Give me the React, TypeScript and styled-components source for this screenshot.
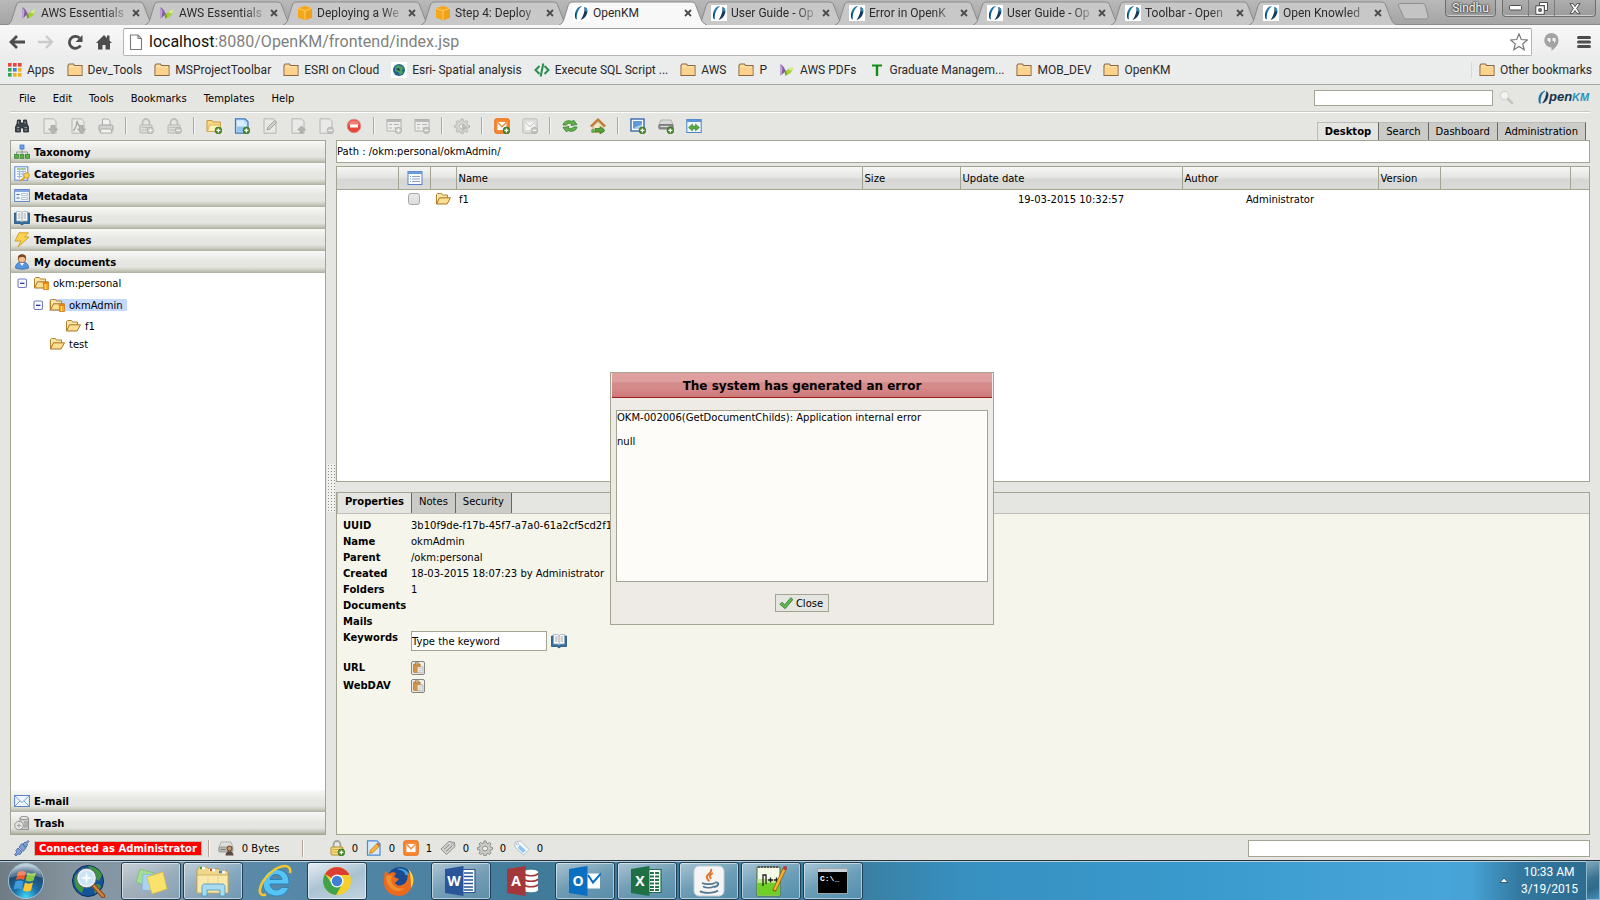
import React from "react";
import styled, { createGlobalStyle, css } from "styled-components";

const EDGE = "#a3a592";
const BASE = "#e5e6e1";
const CHROME_FONT = 'Roboto, "Open Sans", sans-serif';
const PAGE_FONT = '"DejaVu Sans", Verdana, sans-serif';

const Global = createGlobalStyle`
  * { box-sizing: border-box; }
  html, body { margin: 0; }
  body { font-family: ${PAGE_FONT}; font-size: 10px; color: #000; overflow: hidden; }
  button, input { font: inherit; color: inherit; }
  button { border: 0; background: none; padding: 0; }
  a { color: inherit; text-decoration: none; }
`;

/* ---------- icons ---------- */

const plus = (
  <g>
    <circle cx="12.4" cy="12.4" r="3.4" fill="#4b8b2c" stroke="#2f6a1c" strokeWidth=".6" />
    <path d="M12.4 10.4v4M10.4 12.4h4" stroke="#fff" strokeWidth="1.3" />
  </g>
);
const greyBadge = (minus?: boolean) => (
  <g>
    <circle cx="12.4" cy="12.4" r="3.2" fill="#c4c4c2" stroke="#a6a6a4" strokeWidth=".6" />
    <path d={minus ? "M10.4 12.4h4" : "M12.4 10.4v4M10.4 12.4h4"} stroke="#f4f4f2" strokeWidth="1.2" />
  </g>
);
const greyPage = <path d="M2 .8h9.5l2.5 2.6v11.8H2z" fill="#e9e9e7" stroke="#b4b4b2" />;
const greyLock = (
  <g>
    <path d="M4.5 7V4.5a3.5 3.5 0 0 1 7 0V7" fill="none" stroke="#bdbdbb" strokeWidth="1.8" />
    <rect x="2" y="7" width="12" height="8" rx="1" fill="#dcdcda" stroke="#b4b4b2" />
    <path d="M3.5 9.5h9M3.5 12h9" stroke="#bdbdbb" />
  </g>
);
const greyForm = (
  <g>
    <rect x="1" y="1.5" width="14" height="11.5" fill="#ededeb" stroke="#b2b2b0" />
    <path d="M1 3h14" stroke="#b8b8b6" strokeWidth="2" />
    <path d="M3 6.5h3M8 6.5h5M3 10h3M8 10h5" stroke="#b2b2b0" />
  </g>
);
const greyMail = (
  <g>
    <rect x=".8" y=".8" width="14.4" height="14.4" rx="1.5" fill="#dededc" stroke="#bcbcba" />
    <path d="M3.5 4h9v8h-9z" fill="#f4f4f2" />
    <path d="M3.5 4.3L8 8.8l4.5-4.5" fill="none" stroke="#bcbcba" />
  </g>
);
const orangeMail = (
  <g>
    <rect x=".8" y=".8" width="14.4" height="14.4" rx="1.5" fill="#f88a35" stroke="#e96a0c" />
    <path d="M3.5 4h9v8h-9z" fill="#fff" />
    <path d="M3.5 4.3L8 8.8l4.5-4.5" stroke="#ee8a3c" fill="none" strokeWidth="1.3" />
  </g>
);
const openFolder = (
  <g>
    <path d="M1.5 13V3.5L2.5 2.5h4l1 1.5h5V7" fill="#f8e5a8" stroke="#b4822f" />
    <path d="M1.5 13L4.5 6.8h11L12 13z" fill="#fbdf92" stroke="#ab7220" />
  </g>
);
const gear = (fill: string, stroke: string) => (
  <g>
    <path
      d="M7 1h2l.4 2 1.5.6 1.7-1.1 1.4 1.4-1.1 1.7.6 1.5 2 .4v2l-2 .4-.6 1.5 1.1 1.7-1.4 1.4-1.7-1.1-1.5.6-.4 2H7l-.4-2-1.5-.6-1.7 1.1L2 13.1l1.1-1.7-.6-1.5-2-.4v-2l2-.4.6-1.5L2 3.9l1.4-1.4 1.7 1.1L6.6 3z"
      fill={fill}
      stroke={stroke}
    />
    <circle cx="8" cy="8.5" r="2.5" fill="#eeeeea" stroke={stroke} />
  </g>
);

const ICONS: Record<string, React.ReactNode> = {
  binoculars: (
    <g>
      <path d="M3.5 2h3v3h3V2h3l.5 3.5 1.5 3.5v5h-5v-4h-3v4h-5V9L3 5.5z" fill="#3b424a" stroke="#20262c" strokeWidth=".8" />
      <path d="M3 9.5h2.5M10.5 9.5H13M4.5 3.5v2M11 3.5v2M3 12h2.5M10.5 12H13" stroke="#8e9ba6" />
    </g>
  ),
  download: <g>{greyPage}<path d="M9 7.5h4V11h2.5L11 15.5 6.5 11H9z" fill="#b5b5b3" stroke="#9c9c9a" strokeWidth=".7" /></g>,
  pdf: (
    <g>
      {greyPage}
      <path d="M3.5 13C6 9.5 7 6.5 7 3c.8 4 2 6 5.5 7" fill="none" stroke="#a9a9a7" strokeWidth="1.4" />
      <path d="M9.5 7.5H13V11h2.5l-4 4.5-4-4.5h2z" fill="#b5b5b3" stroke="#9c9c9a" strokeWidth=".7" />
    </g>
  ),
  print: (
    <g>
      <path d="M4.5 7V1H10l2 2v4" fill="#f2f2f0" stroke="#acacaa" />
      <rect x="1" y="7" width="14" height="6" rx="1.5" fill="#d2d2d0" stroke="#a2a2a0" />
      <path d="M3 11h10l1 4H2z" fill="#f2f2f0" stroke="#acacaa" />
    </g>
  ),
  lockPlus: <g>{greyLock}{greyBadge()}</g>,
  lockMinus: <g>{greyLock}{greyBadge(true)}</g>,
  folderPlus: (
    <g>
      <path d="M1 13.5v-11h5L7 4h7.5v9.5z" fill="#f8dc83" stroke="#c9973a" />
      <path d="M3.5 7h11v6.5h-13z" fill="#fdf0b8" stroke="#d2a548" strokeWidth=".8" />
      {plus}
    </g>
  ),
  docPlus: (
    <g>
      <path d="M1.5.8H11l3 3v11.4H1.5z" fill="#b9dbf8" stroke="#3c78bb" strokeWidth="1.2" />
      <path d="M3 7.5h9.5v6H3z" fill="#8fc2f0" />
      <path d="M3 2.5h7v3h2.5v3H3z" fill="#dceefd" />
      {plus}
    </g>
  ),
  edit: <g>{greyPage}<path d="M5 12l1-3 6.5-6.5 2 2L8 11z" fill="#cfcfcd" stroke="#a2a2a0" /></g>,
  upload: <g>{greyPage}<path d="M11.5 8l4 4H13v3h-3v-3H7.5z" fill="#b5b5b3" stroke="#a0a09e" strokeWidth=".7" /></g>,
  docMinus: <g>{greyPage}{greyBadge(true)}</g>,
  stop: (
    <g>
      <circle cx="8" cy="8" r="6.8" fill="#e8453b" stroke="#d98f88" />
      <path d="M2.5 7a5.6 5.6 0 0 1 11 0z" fill="#f39a90" opacity=".7" />
      <rect x="4" y="6.6" width="8" height="2.8" rx=".5" fill="#fff" />
    </g>
  ),
  formPlus: <g>{greyForm}{greyBadge()}</g>,
  formMinus: <g>{greyForm}{greyBadge(true)}</g>,
  gearGrey: <g>{gear("#d4d4d2", "#b8b8b6")}<path d="M8 6l6 3.5-6 4z" fill="#bbbbb9" /></g>,
  mailPlus: <g>{orangeMail}{plus}</g>,
  mailMinus: <g>{greyMail}{greyBadge(true)}</g>,
  refresh: (
    <g fill="#63b04c" stroke="#34802a" strokeWidth=".8">
      <path d="M1 7c.5-3.5 5-5.5 9-3.5L11.5 2 15 6.5 9 7.500l1-1.7c-2.5-1-4.5-.5-5.5 1.2z" />
      <path d="M15 9c-.5 3.5-5 5.5-9 3.5L4.5 14 1 9.5l6-1-1 1.7c2.5 1 4.5.5 5.5-1.2z" />
    </g>
  ),
  home: (
    <g>
      <path d="M3 8v6.5h10V8L8 3.5z" fill="#f4e6c4" stroke="#b58a4c" strokeWidth=".8" />
      <path d="M.8 8.5L8 1.5l7.2 7" fill="none" stroke="#c07b35" strokeWidth="2.2" />
      <path d="M5 10.5h5v-2l5 4-5 3.5v-2.500H5z" fill="#55a23b" stroke="#2f7322" strokeWidth=".7" />
      <circle cx="3" cy="13" r="2" fill="#63ad48" />
    </g>
  ),
  imagePlus: (
    <g>
      <rect x="1" y="1" width="13" height="12" fill="#fff" stroke="#3968ab" strokeWidth="1.4" />
      <rect x="3" y="3" width="9" height="7.5" fill="#5d9bd8" />
      <path d="M3 10.5h9V6z" fill="#a7ceef" />
      {plus}
    </g>
  ),
  scanPlus: (
    <g>
      <path d="M3 2h10l2 4.5H1z" fill="#d9d9d9" stroke="#a5a5a5" strokeWidth=".8" />
      <rect x=".8" y="6.5" width="14.4" height="4.5" rx="1" fill="#8d8d8d" stroke="#707070" strokeWidth=".8" />
      <path d="M2.5 8.5h8" stroke="#dadada" />
      {plus}
    </g>
  ),
  split: (
    <g>
      <rect x=".8" y="1.5" width="14.4" height="13" fill="#eef6fb" stroke="#4b84c8" />
      <rect x=".8" y="1.5" width="14.4" height="2.5" fill="#5c95d8" />
      <path d="M6.5 6v2h3V6l4 3.5-4 3.5v-2h-3v2l-4-3.5z" fill="#56ab3c" stroke="#347a28" strokeWidth=".5" />
    </g>
  ),
  taxonomy: (
    <g>
      <path d="M8 4v4M2.5 11V8h11v3M8 8v3" fill="none" stroke="#8f9690" />
      <rect x="6" y="1" width="4" height="4" fill="#6d9fe4" stroke="#4474c2" strokeWidth=".8" />
      <g fill="#5fb04c" stroke="#35812a" strokeWidth=".8">
        <rect x=".6" y="10.5" width="3.8" height="3.8" />
        <rect x="6.1" y="10.5" width="3.8" height="3.8" />
        <rect x="11.6" y="10.5" width="3.8" height="3.8" />
      </g>
    </g>
  ),
  categories: (
    <g>
      <rect x=".8" y=".8" width="13" height="13.4" fill="#f6faff" stroke="#5b87c9" />
      <path d="M3 3h9" stroke="#77b45e" strokeWidth="1.3" />
      <path d="M3 5.5h9M3 8h9M3 10.5h5M5.5 4.5v8M9 4.5v6" stroke="#97b6df" />
      <circle cx="12.5" cy="9.5" r="2.8" fill="#f6cf57" stroke="#c58f1e" strokeWidth=".8" />
      <path d="M11 11l-4.5 4" stroke="#dca52a" strokeWidth="2.2" />
    </g>
  ),
  metadata: (
    <g>
      <rect x=".6" y="1.5" width="14.8" height="12" fill="#eff5fc" stroke="#6688c8" />
      <path d="M.6 3h14.8" stroke="#84a5dd" strokeWidth="2" />
      <path d="M2.5 6.5h3M2.5 10h3" stroke="#3f63ae" strokeWidth="1.2" />
      <path d="M7.5 5.5h6v2h-6zM7.5 9.5h6v2h-6z" fill="#fff" stroke="#a9b5c4" strokeWidth=".8" />
    </g>
  ),
  book: (
    <g>
      <path d="M.5 3h15v10.5H10L8 15l-2-1.5H.5z" fill="#336f9f" stroke="#1e5079" strokeWidth=".8" />
      <path d="M2.5 1.5h4L8 2.5l1.5-1h4V11h-4L8 12l-1.5-1h-4z" fill="#f8fafb" stroke="#8ca6b8" strokeWidth=".7" />
      <path d="M8 2.5V12M4 4h2.5M4 6h2.5M4 8h2.5M9.5 4H12M9.5 6H12M9.5 8H12" stroke="#9a9a9a" strokeWidth=".9" />
    </g>
  ),
  bolt: <path d="M5 .8h9.5L10.5 5H15L4 15l3-6H1z" fill="#fbd252" stroke="#d39b1e" strokeWidth=".9" />,
  user: (
    <g>
      <path d="M1.5 14c0-4 2.5-6 6.5-6s6.5 2 6.5 6c-3 1.5-10 1.5-13 0z" fill="#5795e2" stroke="#2f65ad" strokeWidth=".8" />
      <path d="M6 9l2 3 2-3z" fill="#fff" />
      <circle cx="8" cy="5" r="3.7" fill="#f0c291" stroke="#8d5529" strokeWidth=".7" />
      <path d="M4 5.5C3.5 1.5 5.5.3 8 .3s4.500 1.2 4 5.2c-1-2-2-2.5-4-2.5S5 3.5 4 5.5z" fill="#7d4620" />
    </g>
  ),
  envelope: (
    <g>
      <rect x=".6" y="2.5" width="14.8" height="11" fill="#eef5fd" stroke="#5c82c2" />
      <path d="M1 3l7 6.5L15 3M1 13l5-5M15 13l-5-5" fill="none" stroke="#7ba1d8" />
    </g>
  ),
  trash: (
    <g>
      <path d="M6 3h8.5v11.5H6z" fill="#cfcfcd" stroke="#7f7f7d" strokeWidth=".8" />
      <ellipse cx="10.2" cy="3" rx="4.2" ry="1.6" fill="#e8e8e6" stroke="#7f7f7d" strokeWidth=".8" />
      <path d="M11 6v7M13 6v6.5" stroke="#8c8c8a" />
      <circle cx="5" cy="10.5" r="4.3" fill="#e3e3e1" stroke="#8c8c8a" strokeWidth=".9" />
      <path d="M3 10.5h4M5 8.5v4" stroke="#a0a09e" />
    </g>
  ),
  openFolder,
  folderHome: (
    <g>
      {openFolder}
      <path d="M10.5 8h5v6.5h-5z" fill="#fba61f" stroke="#d67d0c" strokeWidth=".8" />
      <path d="M12.5 9v5" stroke="#ffe2a6" strokeWidth="1.2" />
      <path d="M9.5 8H16" stroke="#d67d0c" strokeWidth="1.2" />
    </g>
  ),
  minus: (
    <g>
      <rect x="4" y="4" width="8.5" height="8.5" rx="1.5" fill="#fff" stroke="#6a7bc4" strokeWidth="1.1" />
      <path d="M6 8.3h4.5" stroke="#1c1f9c" strokeWidth="1.2" />
    </g>
  ),
  columns: (
    <g>
      <rect x="1" y="1.5" width="14" height="13" fill="#f9fbff" stroke="#5681c6" />
      <rect x="1" y="1.5" width="14" height="2.5" fill="#6c9ade" />
      <path d="M5 6.5h8M5 9h8M5 11.5h8M3 6.5h1M3 9h1M3 11.5h1" stroke="#8aa2c8" />
    </g>
  ),
  clipboard: (
    <g>
      <rect x="2" y="2.5" width="9" height="11.5" rx="1" fill="#d89441" stroke="#a36a22" strokeWidth=".8" />
      <rect x="4.5" y="1" width="4" height="3" fill="#cbb590" stroke="#8b6a35" strokeWidth=".7" />
      <path d="M7 6.5h7.5v8H7z" fill="#f4f4f4" stroke="#94918c" strokeWidth=".8" />
      <path d="M8.5 9H13M8.5 11H13M8.5 13h3" stroke="#b6b6b6" strokeWidth=".8" />
    </g>
  ),
  check: <path d="M1 9.5L3.5 7l3 3 7-8L16 4 7 14.5z" fill="#5fb74e" stroke="#31792a" strokeWidth=".9" />,
  plug: (
    <g fill="#7d9fd6" stroke="#476aa6" strokeWidth=".9">
      <path d="M9 4l2-2 1 .5 2-2 1 1-2 2 .5 1.5-2 3z" />
      <path d="M4 8l4 4-2 2.5-2-.5-2 2-1.5-1.5 2-2L2 10.5z" />
      <path d="M5 7l3-3.5L12 8l-3 3.5z" />
    </g>
  ),
  disk: (
    <g>
      <path d="M3 2h10l2 5.5H1z" fill="#dfdfdd" stroke="#a3a3a1" strokeWidth=".8" />
      <rect x=".8" y="7" width="14" height="5" rx="1" fill="#bcbcba" stroke="#8a8a88" strokeWidth=".8" />
      <path d="M2.5 9.5h5" stroke="#777" />
      <circle cx="11.5" cy="8.5" r="2.5" fill="#c99668" stroke="#54372a" strokeWidth=".9" />
      <path d="M7.5 15.5c0-6 8-6 8 0z" fill="#5a4a42" />
    </g>
  ),
  lockYellow: (
    <g>
      <path d="M4.5 7V4.5a3.5 3.5 0 0 1 7 0V7" fill="none" stroke="#a4a49c" strokeWidth="1.8" />
      <rect x="2" y="7" width="12" height="8" rx="1" fill="#f7db7c" stroke="#b48f2e" />
      <path d="M3.5 9.5h9M3.5 12h9" stroke="#d2a942" />
      {plus}
    </g>
  ),
  note: (
    <g>
      <path d="M1.5.8H11l3 3v11.4H1.5z" fill="#d9ebfb" stroke="#4b88cf" strokeWidth="1.2" />
      <path d="M3.5 13.5l1-3.5 7-7L14 5.500l-7 7z" fill="#f5b53c" stroke="#bd7b1c" strokeWidth=".8" />
      <path d="M11 3.5L13.5 6" stroke="#cf5f48" strokeWidth="1.5" />
    </g>
  ),
  mail: orangeMail,
  clip: (
    <g>
      <path d="M1 9l8-7.5 5.500 1 .5 4-8.5 8z" fill="#d4d4d2" stroke="#858583" strokeWidth=".9" />
      <path d="M4 9.5l5.5-5M6 11.5L12 6" stroke="#7e7e7c" />
      <circle cx="12.5" cy="4.3" r="1" fill="#fff" stroke="#858583" strokeWidth=".7" />
    </g>
  ),
  gear: gear("#cacac8", "#8c8c8a"),
  tag: (
    <g>
      <path d="M1 2l5.5-1L15 9.5 9.5 15 1 7z" fill="#f9fcff" stroke="#a9b5c1" strokeWidth=".9" />
      <path d="M5.500 4.5l6.5 6L9 13 4 8z" fill="#8cc5f2" />
      <circle cx="3.5" cy="3.8" r="1" fill="#fff" stroke="#9aa7b3" strokeWidth=".7" />
    </g>
  ),
  magnifier: (
    <g>
      <circle cx="6" cy="6" r="4.5" fill="#f2f2f1" stroke="#d2d2d1" strokeWidth="1.2" />
      <path d="M9.5 9.5L14 14" stroke="#c2c2c1" strokeWidth="2.6" strokeLinecap="round" />
    </g>
  ),
  /* browser chrome */
  leaf: (
    <g>
      <path d="M1.5 2C4 3.500 6 6.500 6.500 9.500l-5 4z" fill="#8457a8" />
      <path d="M1.5 2l2 4-.8 6.500-1.200 1z" fill="#c3a9d6" />
      <path d="M6.5 13.5C6 9.500 8.500 6 14 5c-.5 4-2.500 7.500-7.500 8.500z" fill="#a7cf38" />
      <path d="M9.500 7.500C11 5.500 12.500 5 14.500 4.500l-2 4z" fill="#dcec9a" />
      <path d="M5.500 9.500L7 7.500l1 4.500-1.500 2z" fill="#6fa322" />
    </g>
  ),
  cube: (
    <g>
      <path d="M8 .8l7 2.4v9.6l-7 2.4-7-2.4V3.2z" fill="#f6a81c" />
      <path d="M8 5.8l7-2.4v9.4l-7 2.4z" fill="#e99a10" opacity=".5" />
      <path d="M8 5.8v9.4M1 3.4l7 2.4 7-2.4" stroke="#fcd07a" strokeWidth=".9" fill="none" />
    </g>
  ),
  okm: (
    <g>
      <rect width="16" height="16" fill="#fff" />
      <path d="M9 1C4.5 1.5 1.5 6 2 11.5c.1 1.5.8 2.5 1.8 3-.4-4 .7-10 5.2-13.5z" fill="#1a74a8" />
      <path d="M3.8 14.5C2.5 12 3 8 4.5 6L2.2 9c-.4 2.5.2 4.7 1.6 5.5z" fill="#12395c" />
      <path d="M11.5 2c2.5.8 3.5 3.5 2.5 6.5-1 3-3 5.5-6.5 6.5 2.5-3.5 4.5-8 4-13z" fill="#17395a" />
      <path d="M11.5 2c2 .8 3 2.5 2.7 5L12 6z" fill="#2489bb" />
    </g>
  ),
  page: <path d="M2.5 1H10l3.5 3.5v11h-11zM10 1v3.5h3.5" fill="#fff" stroke="#7b7b7b" strokeWidth="1.1" />,
  bmFolder: (
    <g>
      <path d="M1 13.5v-10L2.2 2h4.3l1 1.5H15v10z" fill="#fbe0a4" stroke="#8d6742" strokeWidth="1.1" />
      <path d="M1.8 5.5h12.6V13H1.8z" fill="#fcd28c" />
    </g>
  ),
  apps: (
    <g>
      {["#e8453c", "#e8453c", "#e8453c", "#35a256", "#3d7fe0", "#f2b01e", "#35a256", "#f2b01e", "#f2b01e"].map((c, i) => (
        <rect key={i} x={2 + (i % 3) * 5} y={1 + Math.floor(i / 3) * 5} width="3.6" height="3.6" fill={c} />
      ))}
    </g>
  ),
  globe: (
    <g>
      <rect width="16" height="16" fill="#fff" />
      <circle cx="8" cy="8" r="6" fill="#20618f" />
      <path d="M4 5l3-2 3 1 3 2-2 2 1 3-3 2-2-3-3-1z" fill="#4b9e5e" />
      <path d="M5 7l3-1 1 3z" fill="#172f49" />
    </g>
  ),
  code: <path d="M5.5 4l-4 4 4 4M10.5 4l4 4-4 4M9.3 1.5l-2.6 13" fill="none" stroke="#2a8f4d" strokeWidth="2" />,
  tee: <path d="M3 2.500h10v2H9.200V14H6.800V4.500H3z" fill="#168a16" />,
};

const Svg = styled.svg<{ $s?: number }>`
  display: block;
  flex: none;
  width: ${(p) => p.$s ?? 16}px;
  height: ${(p) => p.$s ?? 16}px;
`;
const Icon = ({ name, size }: { name: string; size?: number }) => (
  <Svg $s={size} viewBox="0 0 16 16" aria-hidden="true">{ICONS[name]}</Svg>
);

/* ---------- browser window ---------- */

const Screen = styled.div`
  display: flex;
  flex-direction: column;
  height: 100vh;
  background: ${BASE};
`;
const TabStrip = styled.div`
  display: flex;
  height: 25px;
  padding-left: 11px;
  background: linear-gradient(#b9b9b9, #a4a4a4);
  border-bottom: 1px solid #8a8a8a;
  font-family: ${CHROME_FONT};
  font-size: 12px;
`;
const TabBox = styled.div<{ $active?: boolean }>`
  position: relative;
  z-index: ${(p) => (p.$active ? 2 : 1)};
  display: flex;
  align-items: center;
  flex: 0 1 138px;
  min-width: 0;
  height: 25px;
  padding: 0 6px 0 10px;
  gap: 3px;
`;
const TabShape = styled.svg`
  position: absolute;
  z-index: -1;
  left: -4px;
  top: 0;
  width: calc(100% + 10px);
  height: 25px;
`;
const TabLabel = styled.a<{ $active?: boolean }>`
  flex: 1;
  margin-left: 1px;
  overflow: hidden;
  white-space: nowrap;
  color: #2b2b2b;
  mask-image: ${(p) => (p.$active ? "none" : "linear-gradient(90deg, #000 76%, rgba(0, 0, 0, 0.2))")};
`;
const TabClose = styled.button`
  width: 14px;
  height: 14px;
  display: grid;
  place-items: center;
`;
const NewTab = styled.button`
  margin: 0 auto 0 6px;
  height: 24px;
`;
const Caption = styled.div`
  display: flex;
  height: 17px;
  padding-right: 4px;
  gap: 6px;
`;
const CaptionGroup = styled.div`
  display: flex;
  border: 1px solid #6f6f6f;
  border-top: 0;
  border-radius: 0 0 4px 4px;
  background: linear-gradient(#adadad, #9b9b9b);
  box-shadow: inset 0 -1px 0 #cfcfcf;
`;
const CaptionButton = styled.button<{ $w: number }>`
  width: ${(p) => p.$w}px;
  display: grid;
  place-items: center;
  font-size: 12px;
  line-height: 16px;
  color: #f4f4f4;
  text-shadow: 0 0 2px #222, 0 0 2px #222;
  & + & { border-left: 1px solid #7b7b7b; }
`;
const NavBar = styled.div`
  display: flex;
  align-items: center;
  height: 34px;
  padding: 2px 6px 2px 7px;
  gap: 9px;
  background: linear-gradient(#f8f8f8, #ececec);
  button { display: grid; place-items: center; width: 20px; height: 20px; }
  > button:last-child { margin-left: 4px; }
`;
const Omnibox = styled.div`
  flex: 1;
  display: flex;
  align-items: center;
  height: 28px;
  padding: 0 2px 0 4px;
  gap: 5px;
  background: #fff;
  border: 1px solid #b4b4b4;
  border-top-color: #9b9b9b;
  border-radius: 2px;
  font-family: ${CHROME_FONT};
  font-size: 16px;
  line-height: 20px;
`;
const UrlText = styled.a`
  flex: 1;
  color: #808080;
  b { font-weight: 400; color: #111; }
`;
const BookmarkBar = styled.nav`
  display: flex;
  align-items: center;
  height: 26px;
  padding: 0 8px 3px 6px;
  gap: 12px;
  background: #ebecec;
  border-bottom: 1px solid #a5a5a5;
  font-family: ${CHROME_FONT};
  font-size: 12px;
  line-height: 16px;
  color: #2a2a2a;
`;
const Bookmark = styled.a<{ $last?: boolean }>`
  display: flex;
  align-items: center;
  gap: 5px;
  white-space: nowrap;
  ${(p) => p.$last && css`margin-left: auto; padding-left: 7px; border-left: 1px solid #d3d9e0;`}
`;

const TABS: [string, string][] = [
  ["leaf", "AWS Essentials"],
  ["leaf", "AWS Essentials"],
  ["cube", "Deploying a We"],
  ["cube", "Step 4: Deploy"],
  ["okm", "OpenKM"],
  ["okm", "User Guide - Op"],
  ["okm", "Error in OpenK"],
  ["okm", "User Guide - Op"],
  ["okm", "Toolbar - Open"],
  ["okm", "Open Knowled"],
];
const BOOKMARKS: [string, string][] = [
  ["apps", "Apps"],
  ["bmFolder", "Dev_Tools"],
  ["bmFolder", "MSProjectToolbar"],
  ["bmFolder", "ESRI on Cloud"],
  ["globe", "Esri- Spatial analysis"],
  ["code", "Execute SQL Script ..."],
  ["bmFolder", "AWS"],
  ["bmFolder", "P"],
  ["leaf", "AWS PDFs"],
  ["tee", "Graduate Managem..."],
  ["bmFolder", "MOB_DEV"],
  ["bmFolder", "OpenKM"],
];

const Tab = ({ icon, label, active }: { icon: string; label: string; active?: boolean }) => (
  <TabBox $active={active}>
    <TabShape viewBox="0 0 148 25" preserveAspectRatio="none">
      <path
        d="M0 25C3 24 4 22 5 19L9 6C10 3 11 2 14 2H132C135 2 136 3 137 6L142 19C143 22 145 24 148 25"
        fill={active ? "#f8f8f8" : "#c8c8c8"}
        stroke="#8b8b8b"
      />
      {active && <path d="M2 25h144" stroke="#f8f8f8" strokeWidth="2" />}
    </TabShape>
    <Icon name={icon} />
    <TabLabel href="#" $active={active}>{label}</TabLabel>
    <TabClose aria-label="Close tab">
      <svg width="8" height="8" viewBox="0 0 8 8"><path d="M1 1l6 6M7 1L1 7" stroke="#4c4c4c" strokeWidth="1.8" /></svg>
    </TabClose>
  </TabBox>
);

const Browser = () => (
  <header>
    <TabStrip>
      {TABS.map(([icon, label], i) => <Tab key={i} icon={icon} label={label} active={i === 4} />)}
      <NewTab aria-label="New tab">
        <svg width="32" height="18" viewBox="0 0 32 18">
          <path d="M4 1.5h21c2 0 3 1 3.5 2.5L31 14c.5 2-.5 3-2 3H10c-2 0-3-1-3.5-2.5L1.5 4C1 2.5 2 1.5 4 1.5z" fill="#c4c4c4" stroke="#8f8f8f" />
        </svg>
      </NewTab>
      <Caption>
        <CaptionGroup><CaptionButton $w={49}>Sindhu</CaptionButton></CaptionGroup>
        <CaptionGroup>
          <CaptionButton $w={25} aria-label="Minimize">
            <svg width="13" height="6"><rect x=".5" y=".5" width="12" height="4.5" rx="1" fill="#fff" stroke="#4d4d4d" /></svg>
          </CaptionButton>
          <CaptionButton $w={26} aria-label="Restore">
            <svg width="14" height="13">
              <path d="M4.5.5h8v8h-3v-5h-5z" fill="#fff" stroke="#4d4d4d" />
              <path d="M.8 3.8h8.5v8.5H.8z" fill="#fff" stroke="#4d4d4d" />
              <path d="M3.8 6.8h2.5v2.5H3.8z" fill="#888" stroke="#4d4d4d" />
            </svg>
          </CaptionButton>
          <CaptionButton $w={41} aria-label="Close">
            <svg width="12" height="11">
              <path d="M1 .6h3l2 2.9L8 .6h3L7.7 5.5 11 10.4H8L6 7.5l-2 2.9H1l3.3-4.9z" fill="#fff" stroke="#4d4d4d" />
            </svg>
          </CaptionButton>
        </CaptionGroup>
      </Caption>
    </TabStrip>
    <NavBar>
      <button aria-label="Back">
        <svg width="16" height="14" viewBox="0 0 16 14"><path d="M8 1L2 7l6 6M2 7h14" fill="none" stroke="#4d4d4d" strokeWidth="2.8" /></svg>
      </button>
      <button aria-label="Forward">
        <svg width="16" height="14" viewBox="0 0 16 14"><path d="M8 1l6 6-6 6M14 7H0" fill="none" stroke="#cbcbcb" strokeWidth="2.4" /></svg>
      </button>
      <button aria-label="Reload">
        <svg width="17" height="17" viewBox="0 0 17 17">
          <path d="M13.5 11.5A6 6 0 1 1 12.5 4" fill="none" stroke="#4d4d4d" strokeWidth="2.8" />
          <path d="M15.5 1v7h-7z" fill="#4d4d4d" />
        </svg>
      </button>
      <button aria-label="Home">
        <svg width="16" height="16" viewBox="0 0 16 16">
          <path d="M8 1L0 9h2v6.5h4.5V11h3v4.5H14V9h2l-2.5-2.5v-5H11V4z" fill="#4d4d4d" />
        </svg>
      </button>
      <Omnibox>
        <Icon name="page" />
        <UrlText href="#"><b>localhost</b>:8080/OpenKM/frontend/index.jsp</UrlText>
        <button aria-label="Bookmark this page">
          <svg width="18" height="18" viewBox="0 0 18 18">
            <path d="M9 1l2.3 5.5 6 .5-4.6 3.9 1.5 5.8L9 13.5l-5.2 3.2 1.5-5.8L.7 7l6-.5z" fill="#fff" stroke="#777" strokeWidth="1.2" />
          </svg>
        </button>
      </Omnibox>
      <button aria-label="Hangouts">
        <svg width="15" height="18" viewBox="0 0 15 18">
          <path d="M7.5 0a7 7 0 0 1 7 7.2c0 5-4 8.5-7 10.3v-3A7 7 0 0 1 7.5 0z" fill="#a3a3a3" />
          <path d="M3.5 5h3v3.5L5 10V8H3.5zM8.5 5h3v3.500L10 10V8H8.5z" fill="#f4f4f4" />
        </svg>
      </button>
      <button aria-label="Menu">
        <svg width="14" height="14"><path d="M1.5 2.5h11M1.5 7h11M1.5 11.5h11" stroke="#4d4d4d" strokeWidth="3" strokeLinecap="round" /></svg>
      </button>
    </NavBar>
    <BookmarkBar>
      {BOOKMARKS.map(([icon, label]) => <Bookmark key={label} href="#"><Icon name={icon} />{label}</Bookmark>)}
      <Bookmark href="#" $last><Icon name="bmFolder" />Other bookmarks</Bookmark>
    </BookmarkBar>
  </header>
);

/* ---------- OpenKM ---------- */

const Desktop = styled.main`
  position: relative;
  flex: 1;
  min-height: 0;
  display: flex;
  flex-direction: column;
  padding: 0 10px;
`;
const MenuRow = styled.div`
  display: flex;
  align-items: center;
  height: 28px;
  padding-left: 9px;
  border-bottom: 1px solid #fff;
  box-shadow: inset 0 -1px 0 #c9cac5;
`;
const Menus = styled.nav`
  display: flex;
  gap: 17px;
  margin-right: auto;
`;
const SearchInput = styled.input`
  width: 179px;
  height: 16px;
  margin: 0 6px 2px 0;
  background: #fff;
  border: 1px solid ${EDGE};
`;
const SearchButton = styled.button`
  margin: 0 23px 2px 0;
`;
const LogoSvg = styled.svg`
  width: 53px;
  height: 16px;
  margin-bottom: 2px;
`;
const ToolRow = styled.div`
  display: flex;
  align-items: flex-end;
  height: 27px;
  padding-right: 4px;
`;
const Tools = styled.div`
  display: flex;
  align-items: center;
  align-self: stretch;
  padding-bottom: 2px;
  margin: 0 auto 0 -2px;
`;
const Tool = styled.button`
  padding: 0 6px;
`;
const Divider = styled.i`
  width: 2px;
  height: 17px;
  margin: 0 5px;
  background: linear-gradient(90deg, #b3a698 50%, #f6f6f4 50%);
`;
const Tabs = styled.div<{ $bar?: boolean }>`
  display: flex;
  ${(p) => p.$bar && css`background: ${BASE}; border-bottom: 1px solid #bdbebd; height: 21px;`}
`;
const PageTab = styled.button<{ $on?: boolean; $tall?: boolean }>`
  height: ${(p) => (p.$tall ? 20 : 18)}px;
  padding: 0 7px;
  padding-bottom: ${(p) => (p.$tall ? 2 : 0)}px;
  background: ${(p) => (p.$on ? BASE : "#cbccc8")};
  font-weight: ${(p) => (p.$on ? 700 : 400)};
  border-right: 1px solid #666;
  border-top: ${(p) => (p.$tall ? 0 : 1)}px solid #bbb;
  &:first-child { border-left: 1px solid #bbb; }
`;
const Main = styled.div`
  flex: 1;
  min-height: 0;
  display: grid;
  grid-template-columns: 316px 10px minmax(0, 1fr);
`;
const Stack = styled.section`
  display: flex;
  flex-direction: column;
  min-height: 0;
  background: #fff;
  border: 1px solid ${EDGE};
`;
const StackHeader = styled.button`
  display: flex;
  align-items: center;
  gap: 4px;
  height: 22px;
  flex: none;
  padding: 0 3px;
  background: linear-gradient(#f8f8f7, #e6e7e2 45%, #e4e5e0 72%, #c5c6ba 90%, #adae9f);
  font-weight: 700;
`;
const Tree = styled.ul`
  flex: 1;
  margin: 0;
  padding: 1px 0 0 3px;
  list-style: none;
`;
const TreeNode = styled.li<{ $level: number; $h: number; $leaf?: boolean }>`
  display: flex;
  align-items: center;
  height: ${(p) => p.$h}px;
  padding-left: ${(p) => p.$level * 16 + (p.$leaf ? 19 : 0)}px;
`;
const Toggle = styled.button`
  width: 16px;
  height: 16px;
  margin-right: 3px;
`;
const NodeLabel = styled.a<{ $on?: boolean }>`
  display: flex;
  align-items: center;
  height: 12px;
  gap: 4px;
  padding-right: 4px;
  background: ${(p) => (p.$on ? "#c3d9ff" : "none")};
`;
const Splitter = styled.div`
  display: grid;
  place-items: center;
`;
const Grip = styled.div`
  width: 8px;
  height: 48px;
  background: radial-gradient(circle, #8f8f8c 0 1px, transparent 1px) 0 0 / 3px 3px #f1f1ee;
`;
const RightSide = styled.section`
  display: grid;
  grid-template-rows: 23px 3px 316fr 10px 344fr;
  min-height: 0;
`;
const PathBar = styled.div`
  line-height: 22px;
  background: #fff;
  border: 1px solid ${EDGE};
`;
const BrowserPane = styled.div`
  background: #fff;
  border: 1px solid ${EDGE};
`;
const FileTable = styled.table`
  width: 100%;
  table-layout: fixed;
  border-collapse: collapse;
  th {
    height: 22px;
    padding: 1px 0 0 2px;
    text-align: left;
    font-weight: 400;
    background: linear-gradient(#f6f6f4, #e3e3e1 50%, #d6d6d4 55%, #dadad8);
    border-right: 1px solid ${EDGE};
    border-bottom: 1px solid ${EDGE};
  }
  th:last-child { border-right: 0; }
  td { height: 20px; padding: 0; text-align: center; }
  td:nth-child(4) { text-align: left; padding-left: 3px; }
  svg, input { margin: 0 auto; }
`;
const Col = styled.col<{ $w?: number }>`
  width: ${(p) => (p.$w ? p.$w + "px" : "auto")};
`;
const Tick = styled.input`
  appearance: none;
  display: block;
  width: 12px;
  height: 12px;
  border: 1px solid #a9a9a9;
  border-radius: 3px;
  background: linear-gradient(#e9e9e9, #dcdcdc);
`;
const Detail = styled.div`
  min-height: 0;
  background: #f5f5ec;
  border: 1px solid ${EDGE};
`;
const Props = styled.dl`
  display: grid;
  grid-template-columns: 68px 1fr;
  grid-template-rows: repeat(7, 16px) 29px 18px 18px;
  margin: 0;
  padding: 4px 6px;
  line-height: 16px;
  dt { font-weight: 700; white-space: nowrap; align-self: start; }
  dt:nth-of-type(n + 9) { align-self: center; }
  dd { display: flex; align-items: center; gap: 4px; margin: 0; white-space: nowrap; }
  dd:nth-of-type(8) { padding-bottom: 6px; }
`;
const Keyword = styled.input`
  width: 136px;
  height: 20px;
  padding: 1px 0 0;
  border: 1px solid ${EDGE};
  background: #fff;
`;
const CopyButton = styled.button`
  width: 14px;
  height: 14px;
  display: grid;
  place-items: center;
  border: 1px solid #85847f;
  border-radius: 2px;
  background: #efeeea;
`;
const StatusRow = styled.footer`
  display: flex;
  align-items: center;
  height: 25px;
  padding: 1px 0 0 4px;
`;
const UserState = styled.strong`
  margin: 0 1px 0 4px;
  padding: 0 4px;
  line-height: 13px;
  border: 1px solid #c7bfae;
  background: #f00;
  color: #fff;
`;
const Quota = styled.span`
  display: flex;
  align-items: center;
  width: 79px;
  gap: 8px;
  margin-left: 3px;
`;
const Counters = styled.div`
  display: flex;
  margin: 0 auto 0 20px;
`;
const Counter = styled.span`
  display: flex;
  align-items: center;
  gap: 7px;
  width: 37px;
`;
const StatusBox = styled.output`
  width: 342px;
  height: 17px;
  background: #fff;
  border: 1px solid ${EDGE};
`;

const Dialog = styled.section`
  position: absolute;
  z-index: 5;
  left: calc(50% - 190px);
  top: 287px;
  width: 384px;
  height: 253px;
  display: flex;
  flex-direction: column;
  align-items: center;
  padding: 0 1px 12px;
  background: #eeeae6;
  border: 1px solid ${EDGE};
`;
const DialogTitle = styled.h2`
  align-self: stretch;
  margin: 0 0 12px;
  height: 25px;
  font-size: 12px;
  line-height: 26px;
  text-align: center;
  background: linear-gradient(#df9f9f 38%, #d68b8b 40% 60%, #cd7878);
  border-bottom: 1px solid #9d1c1c;
`;
const DialogText = styled.div`
  flex: 1;
  width: 372px;
  padding: 1px 0;
  line-height: 12px;
  white-space: pre-line;
  background: #fdfcf8;
  border: 1px solid ${EDGE};
`;
const DialogButton = styled.button`
  display: flex;
  align-items: center;
  gap: 3px;
  height: 18px;
  margin-top: 12px;
  padding: 0 5px 0 3px;
  background: ${BASE};
  border: 1px solid ${EDGE};
`;

const TOOLS = [
  "binoculars", "download", "pdf", "print", "|", "lockPlus", "lockMinus", "|",
  "folderPlus", "docPlus", "edit", "upload", "docMinus", "stop", "|", "formPlus", "formMinus", "|",
  "gearGrey", "|", "mailPlus", "mailMinus", "|", "refresh", "home", "|", "imagePlus", "scanPlus", "split",
];
const COLUMNS: [string, number?][] = [
  ["", 61], ["#", 32], ["", 26], ["Name"], ["Size", 98], ["Update date", 222], ["Author", 196], ["Version", 62], ["", 130], ["", 19],
];
const COUNTS: [string, string][] = [
  ["lockYellow", "0"], ["note", "0"], ["mail", "1"], ["clip", "0"], ["gear", "0"], ["tag", "0"],
];

const Header = ({ icon, children }: { icon: string; children: React.ReactNode }) => (
  <StackHeader><Icon name={icon} />{children}</StackHeader>
);

const Logo = () => (
  <LogoSvg viewBox="0 0 53 16" role="img" aria-label="OpenKM">
    <path d="M8 1C3.5 2 1 6 2 12c.2 1 .8 1.5 1.5 1.5C3 9 4 4 8 1z" fill="#1a6e9e" stroke="#1a6e9e" strokeWidth=".5" />
    <path d="M9.5 1.5c2 1 2 4 1 6.5-.8 2.5-2.5 4.5-5 5 2.500-3 4-7 4-11.500z" fill="#17344f" stroke="#17344f" strokeWidth=".5" />
    <text x="12" y="11" fontFamily="Liberation Sans, sans-serif" fontSize="13" fontWeight="700" fontStyle="italic" fill="#17344f">pen</text>
    <text x="35" y="11" fontFamily="Liberation Sans, sans-serif" fontSize="11" fontWeight="700" fontStyle="italic" fill="#2a93c4">KM</text>
  </LogoSvg>
);

const OpenKM = () => (
  <Desktop>
    <MenuRow>
      <Menus>
        {["File", "Edit", "Tools", "Bookmarks", "Templates", "Help"].map((m) => <a key={m} href="#">{m}</a>)}
      </Menus>
      <SearchInput aria-label="Search" />
      <SearchButton aria-label="Run search"><Icon name="magnifier" size={15} /></SearchButton>
      <Logo />
    </MenuRow>
    <ToolRow>
      <Tools>
        {TOOLS.map((t, i) => (t === "|" ? <Divider key={i} /> : <Tool key={i} aria-label={t}><Icon name={t} /></Tool>))}
      </Tools>
      <Tabs>
        {["Desktop", "Search", "Dashboard", "Administration"].map((t, i) => <PageTab key={t} $on={i === 0}>{t}</PageTab>)}
      </Tabs>
    </ToolRow>
    <Main>
      <Stack>
        <Header icon="taxonomy">Taxonomy</Header>
        <Header icon="categories">Categories</Header>
        <Header icon="metadata">Metadata</Header>
        <Header icon="book">Thesaurus</Header>
        <Header icon="bolt">Templates</Header>
        <Header icon="user">My documents</Header>
        <Tree>
          <TreeNode $level={0} $h={18}>
            <Toggle aria-label="Collapse"><Icon name="minus" /></Toggle>
            <NodeLabel href="#"><Icon name="folderHome" />okm:personal</NodeLabel>
          </TreeNode>
          <TreeNode $level={1} $h={26}>
            <Toggle aria-label="Collapse"><Icon name="minus" /></Toggle>
            <NodeLabel href="#" $on><Icon name="folderHome" />okmAdmin</NodeLabel>
          </TreeNode>
          <TreeNode $level={2} $h={16} $leaf><NodeLabel href="#"><Icon name="openFolder" />f1</NodeLabel></TreeNode>
          <TreeNode $level={1} $h={20} $leaf><NodeLabel href="#"><Icon name="openFolder" />test</NodeLabel></TreeNode>
        </Tree>
        <Header icon="envelope">E-mail</Header>
        <Header icon="trash">Trash</Header>
      </Stack>
      <Splitter><Grip /></Splitter>
      <RightSide>
        <PathBar>Path : /okm:personal/okmAdmin/</PathBar>
        <span />
        <BrowserPane>
          <FileTable>
            <colgroup>{COLUMNS.map(([, w], i) => <Col key={i} $w={w} />)}</colgroup>
            <thead>
              <tr>{COLUMNS.map(([c], i) => <th key={i}>{c === "#" ? <Icon name="columns" /> : c}</th>)}</tr>
            </thead>
            <tbody>
              <tr>
                <td />
                <td><Tick type="checkbox" aria-label="Select f1" /></td>
                <td><Icon name="openFolder" /></td>
                <td>f1</td>
                <td />
                <td>19-03-2015 10:32:57</td>
                <td>Administrator</td>
                <td /><td /><td />
              </tr>
            </tbody>
          </FileTable>
        </BrowserPane>
        <span />
        <Detail>
          <Tabs $bar>
            {["Properties", "Notes", "Security"].map((t, i) => <PageTab key={t} $tall $on={i === 0}>{t}</PageTab>)}
          </Tabs>
          <Props>
            <dt>UUID</dt><dd>3b10f9de-f17b-45f7-a7a0-61a2cf5cd2f1</dd>
            <dt>Name</dt><dd>okmAdmin</dd>
            <dt>Parent</dt><dd>/okm:personal</dd>
            <dt>Created</dt><dd>18-03-2015 18:07:23 by Administrator</dd>
            <dt>Folders</dt><dd>1</dd>
            <dt>Documents</dt><dd />
            <dt>Mails</dt><dd />
            <dt><label htmlFor="keyword">Keywords</label></dt>
            <dd><Keyword id="keyword" defaultValue="Type the keyword" /><Icon name="book" /></dd>
            <dt>URL</dt><dd><CopyButton aria-label="Copy URL"><Icon name="clipboard" size={12} /></CopyButton></dd>
            <dt>WebDAV</dt><dd><CopyButton aria-label="Copy WebDAV"><Icon name="clipboard" size={12} /></CopyButton></dd>
          </Props>
        </Detail>
      </RightSide>
    </Main>
    <StatusRow>
      <Icon name="plug" />
      <UserState>Connected as Administrator</UserState>
      <Divider />
      <Quota><Icon name="disk" />0 Bytes</Quota>
      <Divider />
      <Counters>{COUNTS.map(([icon, n]) => <Counter key={icon}><Icon name={icon} />{n}</Counter>)}</Counters>
      <StatusBox />
    </StatusRow>
    <Dialog role="dialog" aria-labelledby="error-title">
      <DialogTitle id="error-title">The system has generated an error</DialogTitle>
      <DialogText>{"OKM-002006(GetDocumentChilds): Application internal error\n\nnull"}</DialogText>
      <DialogButton><Icon name="check" size={14} />Close</DialogButton>
    </Dialog>
  </Desktop>
);

/* ---------- Windows taskbar ---------- */

const Bar = styled.div`
  display: flex;
  height: 40px;
  flex: none;
  border-top: 1px solid #24333d;
  box-shadow: inset 0 1px 0 #b9cfdc;
  background: linear-gradient(90deg, #707c84, #8796a1 5%, #8397a6 9%, #5b8aa8 15%, #4d82a3 26%, #427b9a 33%, #3a7fa2 54%, #3790c0 60%, #3a9acd 75%, #48a5da 90%, #47a2d5 92%, #33789f 95%, #2b6a8d);
`;
const Start = styled.button`
  display: flex;
  align-items: center;
  width: 59px;
  padding-left: 7px;
`;
const Apps = styled.div`
  display: flex;
  gap: 2px;
  margin-right: auto;
`;
const AppButton = styled.button<{ $look: string }>`
  display: grid;
  place-items: center;
  width: 60px;
  height: 38px;
  margin-top: 1px;
  border-radius: 3px;
  ${(p) => p.$look !== "none" && css`
    border: 1px solid #1f3f55;
    box-shadow: inset 0 0 0 1px rgba(255, 255, 255, 0.5);
    background: ${p.$look === "active"
      ? "linear-gradient(160deg, rgba(255,255,255,.85), rgba(255,255,255,.5) 50%, rgba(255,255,255,.65))"
      : "linear-gradient(160deg, rgba(255,255,255,.55), rgba(255,255,255,.25) 50%, rgba(255,255,255,.12))"};
  `}
`;
const Tray = styled.button`
  align-self: center;
  margin-right: 12px;
`;
const Clock = styled.time`
  align-self: center;
  width: 56px;
  margin-right: 9px;
  text-align: center;
  font-family: ${CHROME_FONT};
  font-size: 12px;
  line-height: 17px;
  color: #fff;
`;
const ShowDesktop = styled.button`
  width: 14px;
  border: 1px solid #8fb6ca;
  background: linear-gradient(160deg, #7fa5bb, #3a7291 45%, #2f6a8a 70%, #4191bd);
`;

const Office = ({ color, letter, kind }: { color: string; letter: string; kind: string }) => (
  <svg width="32" height="32" viewBox="0 0 32 32">
    {kind === "lines" && <path d="M15 4.5h15v23H15z" fill="#fff" stroke={color} strokeWidth="1.2" />}
    {kind === "lines" && <path d="M19 8h9M19 11.5h9M19 15h9M19 18.5h9M19 22h9M19 25h9" stroke={color} strokeWidth="1.5" />}
    {kind === "grid" && <path d="M15 4.5h15v23H15z" fill="#fff" stroke={color} strokeWidth="1.2" />}
    {kind === "grid" && <path d="M19 8h9M19 11.5h9M19 15h9M19 18.5h9M19 22h9M19 25h9" stroke={color} strokeWidth="2" />}
    {kind === "grid" && <path d="M23.5 6v20" stroke="#fff" strokeWidth="1.2" />}
    {kind === "mail" && <path d="M15 8.5h16v15H15z" fill="#fff" />}
    {kind === "mail" && <path d="M19 10l5 7.5 8-9" fill="none" stroke={color} strokeWidth="2" />}
    {kind === "db" && <path d="M17 7c0-3 14-3 14 0v18c0 3-14 3-14 0z" fill="#fff" />}
    {kind === "db" && <path d="M17 8.5c2 3 12 3 14 0M17 14c2 3 12 3 14 0M17 19.5c2 3 12 3 14 0" fill="none" stroke={color} strokeWidth="1.6" />}
    <path d="M0 4L18.5 1v30L0 28z" fill={color} />
    <text x="9" y="21" textAnchor="middle" fontFamily="Open Sans, sans-serif" fontSize="14" fontWeight="700" fill="#fff">{letter}</text>
  </svg>
);

const Orb = () => (
  <svg width="38" height="38" viewBox="0 0 38 38">
    <defs>
      <radialGradient id="orb" cx=".5" cy=".95" r=".9">
        <stop offset="0" stopColor="#3fd4f7" />
        <stop offset=".4" stopColor="#1a6da4" />
        <stop offset=".8" stopColor="#1d4668" />
        <stop offset="1" stopColor="#a9c1d2" />
      </radialGradient>
    </defs>
    <circle cx="19" cy="19" r="17.5" fill="url(#orb)" stroke="#a9c4d6" />
    <path d="M11 10c3-1.5 5.5-1.5 8 0l-2 8c-2.5-1.5-5-1.5-8 0z" fill="#ee5a2b" />
    <path d="M20.5 10.5c2.5 1.5 5 1.5 8.5 0l-2.5 8c-3 1.5-5.5 1-8 0z" fill="#8bc63e" />
    <path d="M8.5 19.5c3-1.5 5.5-1.5 8 0l-2 8c-2.5-1.5-5-1.5-8 0z" fill="#3f9bdc" />
    <path d="M18 20.5c2.5 1.5 5 1.5 8 0l-2 8c-3 1.5-5.5 1-8 0z" fill="#fdc52f" />
    <path d="M3 16C5 5 13 2 19 2s14 3 16 14C27 12 11 12 3 16z" fill="#fff" opacity=".28" />
  </svg>
);

const APPS: [string, string, React.ReactNode][] = [
  ["Search globe", "none", (
    <svg width="34" height="34" viewBox="0 0 34 34">
      <circle cx="16" cy="17" r="15.5" fill="#15539b" stroke="#0c2f5c" />
      <path d="M16 2c6 0 12 4 14 9l-3 6-5-3-3-6zM3 12l5-6 4 3-4 8 4 6-2 6C4 26 1 19 3 12zM21 21l6-1 2 3-6 7z" fill="#3f9440" />
      <path d="M22 22l9 10" stroke="#8a4b20" strokeWidth="4.5" strokeLinecap="round" />
      <path d="M22 22l9 10" stroke="#d8863f" strokeWidth="2" strokeLinecap="round" />
      <circle cx="14.5" cy="14" r="8.5" fill="#c7e5f6" stroke="#e9edf0" strokeWidth="2.4" />
      <circle cx="14.5" cy="14" r="9.8" fill="none" stroke="#53616b" strokeWidth=".8" />
      <path d="M14.5 8l1.2 4.8 4.8 1.2-4.8 1.2-1.2 4.8-1.2-4.8L8.5 14l4.8-1.2z" fill="#fff" />
    </svg>
  )],
  ["Sticky Notes", "open", (
    <svg width="34" height="30" viewBox="0 0 34 30">
      <path d="M6 3l14 4-5 14-13-5z" fill="#a5dd91" stroke="#74b263" strokeWidth=".6" />
      <path d="M9 8l15 1-1 16-15-1z" fill="#a8d3f5" stroke="#78abd6" strokeWidth=".6" />
      <path d="M13 11l16-5 4 17-15 5z" fill="#fbe26c" stroke="#d9b638" strokeWidth=".7" />
    </svg>
  )],
  ["Explorer", "open", (
    <svg width="36" height="34" viewBox="0 0 36 34">
      <path d="M2 28V6l2-3h8l2 2h10l2 2h7v21z" fill="#f0d78c" stroke="#b99644" strokeWidth=".8" />
      <path d="M5 4h5M14 6h6M24 8h6" stroke="#fff" strokeWidth="2.5" />
      <path d="M5 4h2" stroke="#3aa34a" strokeWidth="2.5" />
      <path d="M15 6h2" stroke="#d9473a" strokeWidth="2.5" />
      <path d="M24 8h3" stroke="#2d8bd0" strokeWidth="2.5" />
      <path d="M2 11h31v18H2z" fill="#fae8aa" stroke="#c5a354" strokeWidth=".8" />
      <path d="M13 11v18M23 11v18" stroke="#ebd184" />
      <path d="M7 32v-9c0-2 1-3 3-3h17c2 0 3 1 3 3v9h-5v-6H12v6z" fill="#a9dbf0" stroke="#4d9cbd" strokeWidth=".9" />
    </svg>
  )],
  ["Internet Explorer", "none", (
    <svg width="34" height="34" viewBox="0 0 34 34">
      <path d="M31 20H12c.5 4 3 6 6.5 6 2.5 0 4-1 5-2.5h7C29 29 24.5 32 18.5 32 10.5 32 5 26.5 5 19S10.5 5.5 18 5.5c8 0 13.5 5 13 14.5zM12 15.500h12c-.5-3-2.5-5-6-5s-5.5 2-6 5z" fill="#55c4f2" stroke="#1a7fc0" strokeWidth=".8" />
      <path d="M32 9c1-4-1-7-5-7C18 2 4 14 2 25c-1 5 2 7 6 5.5" fill="none" stroke="#f6c72c" strokeWidth="2.6" />
    </svg>
  )],
  ["Chrome", "active", (
    <svg width="30" height="30" viewBox="0 0 30 30">
      <circle cx="15" cy="15" r="14" fill="#f6cf2a" />
      <path d="M15 15L2.9 8A14 14 0 0 1 27.1 8L27 9H15z" fill="#db3f33" />
      <path d="M2.9 8A14 14 0 0 0 14 29l6-10.5L15 15l-5.5 2z" fill="#3ea34b" />
      <circle cx="15" cy="15" r="6.5" fill="#fff" />
      <circle cx="15" cy="15" r="5.2" fill="#3f7fd6" />
    </svg>
  )],
  ["Firefox", "none", (
    <svg width="32" height="32" viewBox="0 0 32 32">
      <circle cx="17" cy="15" r="13" fill="#1b4a92" />
      <path d="M14 4c6-2 14 3 14 11-2-5-4-5-6-5 1-3-4-5-8-6z" fill="#3ca0e0" />
      <path d="M2 6l4 3c2-2 5-2 7-1l-2 4 5 2-4 4c3 4 8 3 11-1 2-3 2-7 1-10 5 4 7 9 5 14-2 6-7 10-13 10C8 31 2 26 1 19 1 14 1 10 2 6z" fill="#ea6a20" />
      <path d="M25 4c6 5 7 13 3 19 0-5 0-13-3-19z" fill="#fbd43b" />
      <path d="M3 12c2-2 4-2 6-1l-1 4c1 6 6 10 14 8-6 6-18 3-19-11z" fill="#f08f2d" />
    </svg>
  )],
  ["Word", "open", <Office color="#2a5599" letter="W" kind="lines" />],
  ["Access", "none", <Office color="#a4373a" letter="A" kind="db" />],
  ["Outlook", "open", <Office color="#0b6fc2" letter="O" kind="mail" />],
  ["Excel", "open", <Office color="#1f7145" letter="X" kind="grid" />],
  ["Java", "open", (
    <svg width="32" height="32" viewBox="0 0 32 32">
      <rect x="1" y="1" width="30" height="30" rx="5" fill="#f4f4f4" stroke="#c4ccd2" />
      <path d="M18 4c2 4-6 6-4 9 .5 1.5 1.5 2 2 3.5M20 8c-5 3-3 4-2 6" fill="none" stroke="#e4762b" strokeWidth="2" />
      <path d="M9 18c3 1.5 10 1.5 13 0M10 21.5c3 1.5 8 1.5 11 0M22 17.5c5-.5 4 3.5-1 4.5M7 26c3 2.5 14 2.5 18-.5" fill="none" stroke="#54798f" strokeWidth="1.8" />
    </svg>
  )],
  ["Notepad++", "open", (
    <svg width="32" height="34" viewBox="0 0 32 34">
      <path d="M2 3h23v29H2z" fill="#f4fae6" stroke="#4d6e2b" />
      <path d="M2.5 15h22v4h-22z" fill="#bfe88e" />
      <path d="M2.5 19h22v12.5h-22z" fill="#6fcf26" />
      <path d="M3 3h21" stroke="#555" strokeWidth="2" strokeDasharray="2 1" />
      <path d="M8 22V11h3v9M13 16h5M15.5 13.5v5M19 16h5M21.5 13.5v5" fill="none" stroke="#222" strokeWidth="1.3" />
      <path d="M30 4L19 27" stroke="#8a5a16" strokeWidth="4" />
      <path d="M30 4L19.5 26" stroke="#f3b52e" strokeWidth="2.5" />
      <circle cx="30" cy="4" r="2" fill="#b63a3a" />
    </svg>
  )],
  ["Command Prompt", "open", (
    <svg width="32" height="26" viewBox="0 0 32 26">
      <rect x=".5" y=".5" width="30" height="25" fill="#000" stroke="#9aa4aa" />
      <path d="M1 2.5h29" stroke="#c9d1d6" strokeWidth="3" />
      <text x="3" y="13" fontFamily="Liberation Mono, monospace" fontSize="8" fontWeight="700" fill="#fff">C:\_</text>
    </svg>
  )],
];

const Taskbar = () => (
  <Bar>
    <Start aria-label="Start"><Orb /></Start>
    <Apps>{APPS.map(([name, look, art]) => <AppButton key={name} $look={look} aria-label={name}>{art}</AppButton>)}</Apps>
    <Tray aria-label="Show hidden icons">
      <svg width="10" height="7"><path d="M5 1l4 4.5H1z" fill="#fff" stroke="#1c4666" strokeWidth=".8" /></svg>
    </Tray>
    <Clock>10:33 AM<br />3/19/2015</Clock>
    <ShowDesktop aria-label="Show desktop" />
  </Bar>
);

export default function App() {
  return (
    <Screen>
      <Global />
      <Browser />
      <OpenKM />
      <Taskbar />
    </Screen>
  );
}
